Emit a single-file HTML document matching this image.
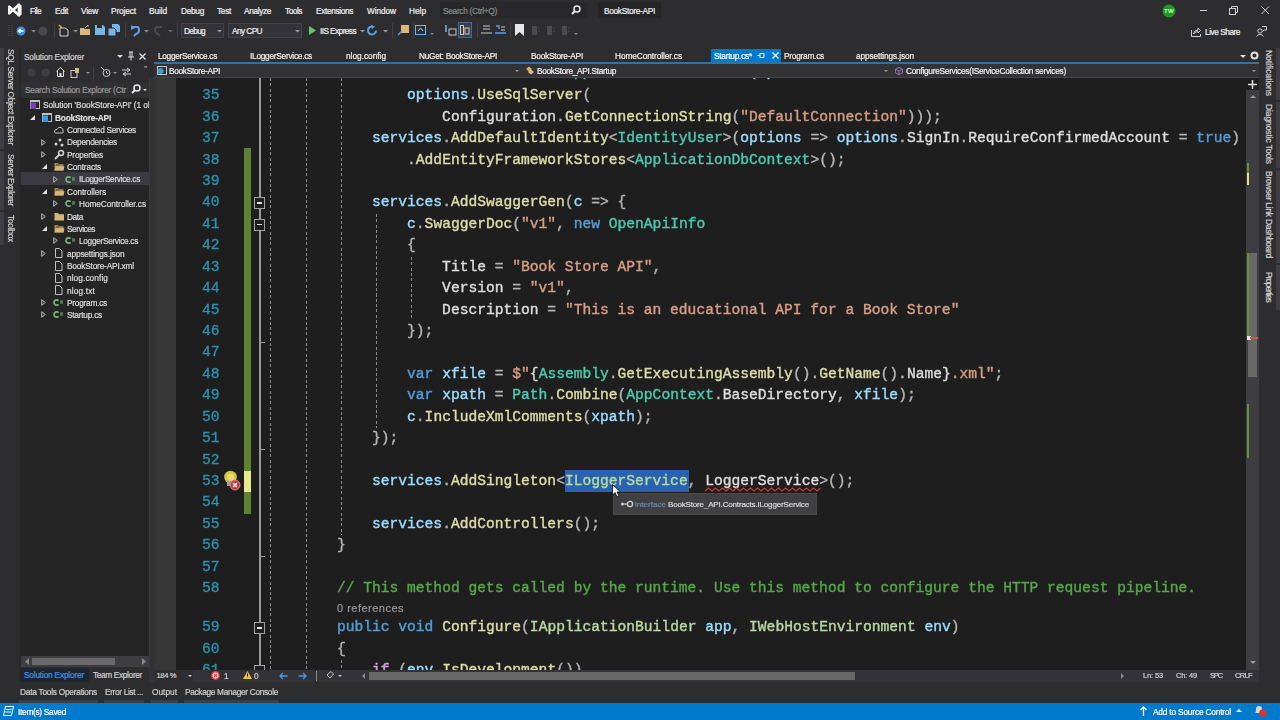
<!DOCTYPE html>
<html><head><meta charset="utf-8">
<style>
*{margin:0;padding:0;box-sizing:border-box}
html,body{width:1280px;height:720px;overflow:hidden;background:#2d2d30}
#root{position:absolute;left:0;top:0;width:1280px;height:720px;filter:blur(0.4px)}
body{position:relative;font-family:"Liberation Sans",sans-serif;font-size:9px;color:#f1f1f1}
.a{position:absolute}
.t{position:absolute;white-space:pre;height:12px;line-height:12px;-webkit-text-stroke:0.2px currentColor}
.code{position:absolute;font-family:"Liberation Mono",monospace;font-size:14.61px;white-space:pre;line-height:21.43px;height:21.43px;-webkit-text-stroke:0.4px currentColor}
.v{color:#9cdcfe}.m{color:#dcdcaa}.ty{color:#4ec9b0}.if{color:#b8d7a3}.k{color:#569cd6}.s{color:#d69d85}.c{color:#57a64a}.p{color:#b4b4b4}.w{color:#dcdcdc}.ck{color:#d8a0df}
.ln{position:absolute;font-family:"Liberation Mono",monospace;font-size:14.61px;-webkit-text-stroke:0.35px currentColor;color:#2b91af;line-height:21.43px;left:0;width:64.5px;text-align:right}
.g{position:absolute;width:1px;background:repeating-linear-gradient(to bottom,#8a8a8a 0,#8a8a8a 3px,transparent 3px,transparent 5.3px)}
svg{position:absolute;overflow:visible}
</style></head><body><div id="root">

<!-- ===== Title / menu bar + toolbar ===== -->
<div class="a" style="left:0;top:0;width:1280px;height:48px;background:#2d2d30"></div>
<svg style="left:8px;top:3px" width="14" height="14" viewBox="0 0 14 14"><path d="M1.2 3.6 L11 12.3 M1.2 10.4 L11 1.7" stroke="#f4f4f4" stroke-width="2.6" stroke-linecap="round"/><rect x="0" y="3" width="2.4" height="8" rx="0.6" fill="#f4f4f4"/><path d="M9.6 0.4 L13.6 2.2 L13.6 11.8 L9.6 13.6 Z" fill="#f4f4f4"/></svg>
<div class="t" style="left:30.0px;top:4.5px;font-size:8.3px;color:#f1f1f1;letter-spacing:-0.593px">File</div>
<div class="t" style="left:55.0px;top:4.5px;font-size:8.3px;color:#f1f1f1;letter-spacing:-0.325px">Edit</div>
<div class="t" style="left:81.0px;top:4.5px;font-size:8.3px;color:#f1f1f1;letter-spacing:-0.210px">View</div>
<div class="t" style="left:111.0px;top:4.5px;font-size:8.3px;color:#f1f1f1;letter-spacing:-0.119px">Project</div>
<div class="t" style="left:149.0px;top:4.5px;font-size:8.3px;color:#f1f1f1;letter-spacing:-0.091px">Build</div>
<div class="t" style="left:181.0px;top:4.5px;font-size:8.3px;color:#f1f1f1;letter-spacing:-0.291px">Debug</div>
<div class="t" style="left:217.0px;top:4.5px;font-size:8.3px;color:#f1f1f1;letter-spacing:-0.305px">Test</div>
<div class="t" style="left:244.0px;top:4.5px;font-size:8.3px;color:#f1f1f1;letter-spacing:-0.361px">Analyze</div>
<div class="t" style="left:285.0px;top:4.5px;font-size:8.3px;color:#f1f1f1;letter-spacing:-0.475px">Tools</div>
<div class="t" style="left:316.0px;top:4.5px;font-size:8.3px;color:#f1f1f1;letter-spacing:-0.360px">Extensions</div>
<div class="t" style="left:367.0px;top:4.5px;font-size:8.3px;color:#f1f1f1;letter-spacing:-0.087px">Window</div>
<div class="t" style="left:409.0px;top:4.5px;font-size:8.3px;color:#f1f1f1;letter-spacing:-0.017px">Help</div>
<div class="a" style="left:440px;top:2px;width:147px;height:16px;background:#28282a;"></div>
<div class="t" style="left:443.0px;top:4.5px;font-size:8.3px;color:#8a8a8a;letter-spacing:-0.289px">Search (Ctrl+Q)</div>
<svg style="left:571px;top:5px" width="10" height="10" viewBox="0 0 10 10"><circle cx="6" cy="4" r="3" fill="none" stroke="#e8e8e8" stroke-width="1.5"/><path d="M4 6 L1 9" stroke="#e8e8e8" stroke-width="2"/></svg>
<div class="a" style="left:598px;top:2px;width:63px;height:16px;background:#252527;"></div>
<div class="t" style="left:604.0px;top:4.5px;font-size:8.3px;color:#f1f1f1;letter-spacing:-0.300px">BookStore-API</div>
<svg style="left:1162px;top:4px" width="14" height="14" viewBox="0 0 14 14"><circle cx="7" cy="7" r="6.5" fill="#1f9a1f"/></svg>
<div class="t" style="left:1164.0px;top:5.0px;font-size:6px;color:#d8ffd8;letter-spacing:0.336px">TW</div>
<div class="a" style="left:1200px;top:10px;width:7px;height:1px;background:#d0d0d0;"></div>
<svg style="left:1229px;top:6px" width="10" height="10" viewBox="0 0 10 10"><rect x="0.5" y="2.5" width="6" height="6" fill="none" stroke="#d0d0d0"/><path d="M2.5 2.5 L2.5 0.5 L8.5 0.5 L8.5 6.5 L6.5 6.5" fill="none" stroke="#d0d0d0"/></svg>
<svg style="left:1261px;top:6px" width="9" height="9" viewBox="0 0 9 9"><path d="M0.5 0.5 L8 8 M8 0.5 L0.5 8" stroke="#d0d0d0" stroke-width="1"/></svg>
<svg style="left:8px;top:24px" width="5" height="14" viewBox="0 0 5 14"><path d="M1 1 L1 13 M4 1 L4 13" stroke="#555" stroke-dasharray="1 1"/></svg>
<svg style="left:16px;top:26px" width="10" height="10" viewBox="0 0 10 10"><circle cx="5" cy="5" r="4.5" fill="#3d8ee0"/><path d="M7.5 5 L2.5 5 M4.5 3 L2.5 5 L4.5 7" stroke="#fff" stroke-width="1.3" fill="none"/></svg>
<svg style="left:30.5px;top:29.75px" width="5.0" height="3.5" viewBox="0 0 5.0 3.5"><path d="M0 0 L5.0 0 L2.5 2.5 Z" fill="#888"/></svg>
<svg style="left:38px;top:26px" width="10" height="10" viewBox="0 0 10 10"><circle cx="5" cy="5" r="4.5" fill="#4a4a4a"/></svg>
<div class="a" style="left:54px;top:23px;width:1px;height:15px;background:#3f3f46;"></div>
<svg style="left:58px;top:24px" width="12" height="13" viewBox="0 0 12 13"><path d="M2 4 L2 12 L10 12 L10 6 L7 4 Z" fill="none" stroke="#d0d0d0"/><path d="M1 1 L4 4" stroke="#e0b060" stroke-width="1.5"/></svg>
<svg style="left:72.5px;top:29.75px" width="5.0" height="3.5" viewBox="0 0 5.0 3.5"><path d="M0 0 L5.0 0 L2.5 2.5 Z" fill="#888"/></svg>
<svg style="left:80px;top:25px" width="12" height="11" viewBox="0 0 12 11"><path d="M0 3 L4 3 L5 4 L10 4 L10 10 L0 10 Z" fill="#dcb67a"/><path d="M5 3 L8 0 L8 2" stroke="#e0b060" fill="none"/></svg>
<svg style="left:95px;top:25px" width="10" height="10" viewBox="0 0 10 10"><path d="M0 0 L8 0 L10 2 L10 10 L0 10 Z" fill="#75b6e7"/><rect x="2" y="0" width="5" height="3" fill="#2d2d30"/></svg>
<svg style="left:108px;top:24px" width="12" height="12" viewBox="0 0 12 12"><path d="M4 0 L10 0 L12 2 L12 8 L4 8 Z" fill="#75b6e7"/><path d="M0 4 L6 4 L8 6 L8 12 L0 12 Z" fill="#75b6e7" stroke="#2d2d30"/></svg>
<div class="a" style="left:125px;top:23px;width:1px;height:15px;background:#3f3f46;"></div>
<svg style="left:130px;top:25px" width="10" height="12" viewBox="0 0 10 12"><path d="M2 2 L7 2 Q9 2 9 5 Q9 8 6 9 L4 11" stroke="#5aa0e8" stroke-width="2" fill="none"/><path d="M1 0 L1 5 L5 3 Z" fill="#5aa0e8"/></svg>
<svg style="left:143.5px;top:29.75px" width="5.0" height="3.5" viewBox="0 0 5.0 3.5"><path d="M0 0 L5.0 0 L2.5 2.5 Z" fill="#888"/></svg>
<svg style="left:154px;top:25px" width="10" height="12" viewBox="0 0 10 12"><path d="M8 2 L3 2 Q1 2 1 5 Q1 8 4 9 L6 11" stroke="#4a4a4a" stroke-width="2" fill="none"/></svg>
<svg style="left:167.5px;top:29.75px" width="5.0" height="3.5" viewBox="0 0 5.0 3.5"><path d="M0 0 L5.0 0 L2.5 2.5 Z" fill="#666"/></svg>
<div class="a" style="left:177px;top:23px;width:1px;height:15px;background:#3f3f46;"></div>
<div class="a" style="left:181px;top:23px;width:43px;height:15px;background:#333337;border:1px solid #434346"></div>
<div class="t" style="left:184.0px;top:25.0px;font-size:8.3px;color:#f1f1f1;letter-spacing:-0.691px">Debug</div>
<svg style="left:216.5px;top:29.75px" width="5.0" height="3.5" viewBox="0 0 5.0 3.5"><path d="M0 0 L5.0 0 L2.5 2.5 Z" fill="#999"/></svg>
<div class="a" style="left:228px;top:23px;width:74px;height:15px;background:#333337;border:1px solid #434346"></div>
<div class="t" style="left:232.0px;top:25.0px;font-size:8.3px;color:#f1f1f1;letter-spacing:-0.590px">Any CPU</div>
<svg style="left:294.5px;top:29.75px" width="5.0" height="3.5" viewBox="0 0 5.0 3.5"><path d="M0 0 L5.0 0 L2.5 2.5 Z" fill="#999"/></svg>
<svg style="left:309px;top:26px" width="7" height="9" viewBox="0 0 7 9"><path d="M0 0 L7 4.5 L0 9 Z" fill="#6cc16c"/></svg>
<div class="t" style="left:320.0px;top:25.0px;font-size:8.3px;color:#f1f1f1;letter-spacing:-0.585px">IIS Express</div>
<svg style="left:359.5px;top:29.75px" width="5.0" height="3.5" viewBox="0 0 5.0 3.5"><path d="M0 0 L5.0 0 L2.5 2.5 Z" fill="#999"/></svg>
<svg style="left:367px;top:25px" width="11" height="11" viewBox="0 0 11 11"><path d="M9 5.5 A4 4 0 1 1 5.5 1.5" stroke="#5aa0e8" stroke-width="2" fill="none"/><path d="M4 0 L8 1.5 L5 4 Z" fill="#5aa0e8"/></svg>
<svg style="left:382.5px;top:29.75px" width="5.0" height="3.5" viewBox="0 0 5.0 3.5"><path d="M0 0 L5.0 0 L2.5 2.5 Z" fill="#999"/></svg>
<div class="a" style="left:392px;top:23px;width:1px;height:15px;background:#3f3f46;"></div>
<svg style="left:398px;top:24px" width="11" height="12" viewBox="0 0 11 12"><rect x="3" y="1" width="8" height="8" fill="#dcb67a"/><path d="M0 11 L4 7" stroke="#6aa0e0" stroke-width="1.5"/></svg>
<div class="a" style="left:413px;top:23px;width:1px;height:15px;background:#3f3f46;"></div>
<svg style="left:415px;top:25px" width="11" height="10" viewBox="0 0 11 10"><rect x="0.5" y="0.5" width="10" height="9" fill="none" stroke="#75b6e7"/><path d="M3 6 L5.5 3 L8 6" stroke="#d0d0d0" fill="none"/></svg>
<svg style="left:430px;top:33.0px" width="4" height="3" viewBox="0 0 4 3"><path d="M0 0 L4 0 L2 2 Z" fill="#888"/></svg>
<svg style="left:445px;top:25px" width="12" height="11" viewBox="0 0 12 11"><path d="M1 0 L1 7" stroke="#75b6e7" stroke-width="1.5"/><rect x="4" y="4" width="7" height="6" fill="none" stroke="#c8c8c8"/></svg>
<div class="a" style="left:458px;top:22px;width:14px;height:16px;background:#3e3e40;border:1px solid #3a6ea8"></div>
<svg style="left:460px;top:25px" width="10" height="10" viewBox="0 0 10 10"><rect x="0.5" y="0.5" width="3" height="9" fill="none" stroke="#c8c8c8"/><rect x="5" y="3" width="4" height="6" fill="none" stroke="#c8c8c8"/></svg>
<div class="a" style="left:477px;top:23px;width:1px;height:15px;background:#3f3f46;"></div>
<svg style="left:481px;top:25px" width="11" height="11" viewBox="0 0 11 11"><path d="M2 1 L9 1 M2 4 L9 4 M0 8 L11 8" stroke="#c8c8c8" stroke-width="1.2"/></svg>
<svg style="left:495px;top:25px" width="11" height="11" viewBox="0 0 11 11"><path d="M1 1 L4 1 L4 4 M0 8 L11 8" stroke="#5aa0e8" stroke-width="1.3" fill="none"/><path d="M6 2 L10 2 M6 5 L10 5" stroke="#c8c8c8"/></svg>
<div class="a" style="left:510px;top:23px;width:1px;height:15px;background:#3f3f46;"></div>
<svg style="left:515px;top:24px" width="9" height="12" viewBox="0 0 9 12"><path d="M0 0 L9 0 L9 12 L4.5 8 L0 12 Z" fill="#e8e8e8"/></svg>
<svg style="left:531px;top:25px" width="9" height="11" viewBox="0 0 9 11"><path d="M1 1 L6 1 L6 10 L1 10 Z" fill="#4a4a4a"/><path d="M7 3 L9 3 M7 6 L9 6" stroke="#4a4a4a"/></svg>
<svg style="left:546px;top:25px" width="9" height="11" viewBox="0 0 9 11"><path d="M1 1 L6 1 L6 10 L1 10 Z" fill="#4a4a4a"/><path d="M7 3 L9 3 M7 6 L9 6" stroke="#4a4a4a"/></svg>
<svg style="left:561px;top:25px" width="9" height="11" viewBox="0 0 9 11"><path d="M1 1 L6 1 L6 10 L1 10 Z" fill="#4a4a4a"/><path d="M7 3 L9 3 M7 6 L9 6" stroke="#4a4a4a"/></svg>
<svg style="left:574px;top:33.0px" width="4" height="3" viewBox="0 0 4 3"><path d="M0 0 L4 0 L2 2 Z" fill="#888"/></svg>
<svg style="left:1191px;top:27px" width="10" height="10" viewBox="0 0 10 10"><path d="M0.5 3 L0.5 9.5 L9.5 9.5 L9.5 7" stroke="#d0d0d0" fill="none"/><path d="M2.5 7 Q3 3 7 3 L7 1 L9.5 3.5 L7 6 L7 4.5 Q4 4.5 2.5 7" fill="none" stroke="#d0d0d0"/></svg>
<div class="t" style="left:1205.0px;top:26.2px;font-size:8.3px;color:#f1f1f1;letter-spacing:-0.468px">Live Share</div>
<svg style="left:1256px;top:26px" width="11" height="11" viewBox="0 0 11 11"><circle cx="4" cy="5" r="2.2" fill="none" stroke="#d0d0d0"/><path d="M0.5 10.5 Q4 6 7.5 10.5" fill="none" stroke="#d0d0d0"/><path d="M6 0.5 L10.5 0.5 L10.5 4 L8 4 L6.5 5.5" fill="none" stroke="#d0d0d0"/></svg>

<!-- ===== Left tool strip ===== -->
<div class="a" style="left:0;top:48px;width:20px;height:655px;background:#2d2d30"></div>
<div class="a" style="left:0px;top:48px;width:4px;height:101px;background:#3e3e42;"></div>
<div class="a" style="left:0px;top:151px;width:4px;height:59px;background:#3e3e42;"></div>
<div class="a" style="left:0px;top:212px;width:4px;height:33px;background:#3e3e42;"></div>
<div class="t" style="left:4.5px;top:49px;font-size:8.3px;color:#d0d0d0;letter-spacing:-0.252px;transform-origin:0 0;transform:translate(12px,0) rotate(90deg)">SQL Server Object Explorer</div>
<div class="t" style="left:4.5px;top:154px;font-size:8.3px;color:#d0d0d0;letter-spacing:-0.377px;transform-origin:0 0;transform:translate(12px,0) rotate(90deg)">Server Explorer</div>
<div class="t" style="left:4.5px;top:215px;font-size:8.3px;color:#d0d0d0;letter-spacing:-0.229px;transform-origin:0 0;transform:translate(12px,0) rotate(90deg)">Toolbox</div>
<div class="a" style="left:19px;top:48px;width:2px;height:634px;background:#282829;"></div>

<!-- ===== Solution explorer ===== -->
<div class="a" style="left:21px;top:48px;width:129px;height:634px;background:#252526"></div>
<div class="a" style="left:21px;top:48px;width:129px;height:18px;background:#2d2d30;"></div>
<div class="t" style="left:24.0px;top:51.2px;font-size:8.3px;color:#d0d0d0;letter-spacing:-0.188px">Solution Explorer</div>
<svg style="left:117px;top:55.0px" width="6" height="4" viewBox="0 0 6 4"><path d="M0 0 L6 0 L3 3 Z" fill="#e0e0e0"/></svg>
<svg style="left:128px;top:51px" width="6" height="10" viewBox="0 0 6 10"><path d="M1 1 L5 1 M2 1 L2 6 M4 1 L4 6 M0 6 L6 6 M3 6 L3 9.5" stroke="#e0e0e0" fill="none"/></svg>
<svg style="left:139px;top:53px" width="7" height="7" viewBox="0 0 7 7"><path d="M0.5 0.5 L6.5 6.5 M6.5 0.5 L0.5 6.5" stroke="#e8e8e8" stroke-width="1.2"/></svg>
<div class="a" style="left:21px;top:66px;width:129px;height:16px;background:#2d2d30;"></div>
<svg style="left:27px;top:68px" width="9" height="9" viewBox="0 0 9 9"><circle cx="4.5" cy="4.5" r="4" fill="#3e3e40"/></svg>
<svg style="left:41px;top:68px" width="9" height="9" viewBox="0 0 9 9"><circle cx="4.5" cy="4.5" r="4" fill="#3e3e40"/></svg>
<svg style="left:56px;top:67px" width="9" height="10" viewBox="0 0 9 10"><path d="M0.5 4.5 L4.5 0.5 L8.5 4.5 M1.5 3.5 L1.5 9.5 L7.5 9.5 L7.5 3.5" fill="none" stroke="#e0e0e0"/><rect x="3.5" y="6" width="2" height="3.5" fill="#e0e0e0"/></svg>
<svg style="left:70px;top:67px" width="12" height="11" viewBox="0 0 12 11"><rect x="1" y="3.5" width="6" height="7" fill="none" stroke="#c8c8c8"/><rect x="5" y="1" width="4" height="5" fill="#dcb67a"/></svg>
<svg style="left:85.5px;top:72.0px" width="4" height="3" viewBox="0 0 4 3"><path d="M0 0 L4 0 L2 2 Z" fill="#999"/></svg>
<div class="a" style="left:93px;top:67px;width:1px;height:14px;background:#3f3f46;"></div>
<svg style="left:101px;top:67px" width="10" height="11" viewBox="0 0 10 11"><circle cx="5.5" cy="6" r="3.5" fill="none" stroke="#c8c8c8"/><path d="M5.5 4 L5.5 6 L7 7" stroke="#c8c8c8" fill="none"/><path d="M0 0 L3 3" stroke="#c8c8c8"/></svg>
<svg style="left:113px;top:72.0px" width="4" height="3" viewBox="0 0 4 3"><path d="M0 0 L4 0 L2 2 Z" fill="#999"/></svg>
<svg style="left:122px;top:67px" width="9" height="10" viewBox="0 0 9 10"><path d="M0 3 L8 3 M5 1 L8 3 L5 5 M9 7 L1 7 M4 5 L1 7 L4 9" stroke="#d0d0d0" fill="none"/></svg>
<div class="t" style="left:144.0px;top:63.2px;font-size:8px;color:#aaa;letter-spacing:-0.028px">&#x27;&#x27;</div>
<div class="a" style="left:21px;top:82px;width:128px;height:16px;background:#303032;"></div>
<div class="t" style="left:25.0px;top:83.7px;font-size:8.3px;color:#999999;letter-spacing:-0.239px">Search Solution Explorer (Ctr</div>
<svg style="left:131px;top:84px" width="10" height="10" viewBox="0 0 10 10"><circle cx="6" cy="4" r="3" fill="none" stroke="#e8e8e8" stroke-width="1.5"/><path d="M4 6 L1 9" stroke="#e8e8e8" stroke-width="2"/></svg>
<svg style="left:143px;top:89.0px" width="4" height="3" viewBox="0 0 4 3"><path d="M0 0 L4 0 L2 2 Z" fill="#e0e0e0"/></svg>
<div class="a" style="left:21px;top:172.2px;width:128px;height:12.8px;background:#3a3a40;"></div>
<svg style="left:30px;top:100.2px" width="10" height="9" viewBox="0 0 10 9"><rect x="0.5" y="0.5" width="9" height="8" fill="none" stroke="#c0c0c0"/><rect x="0.5" y="0" width="9" height="2" fill="#c0c0c0"/><rect x="0.5" y="2.5" width="5.5" height="6.5" fill="#7a3fb0"/></svg>
<div class="t" style="left:43.0px;top:99.4px;font-size:8.3px;color:#dedede;letter-spacing:-0.076px;overflow:hidden;width:107px">Solution &#x27;BookStore-API&#x27; (1 of</div>
<svg style="left:30px;top:115.04px" width="5" height="5" viewBox="0 0 5 5"><path d="M5 0 L5 5 L0 5 Z" fill="#e0e0e0"/></svg>
<svg style="left:42px;top:113.04px" width="10" height="9" viewBox="0 0 10 9"><rect x="0.5" y="0.5" width="9" height="8" fill="none" stroke="#c0c0c0"/><rect x="0.5" y="0" width="9" height="2" fill="#c0c0c0"/><rect x="0.5" y="2.5" width="5.5" height="6.5" fill="#3a9ad8"/></svg>
<div class="t" style="left:55.0px;top:111.7px;font-size:8.3px;color:#dedede;letter-spacing:-0.197px;font-weight:bold">BookStore-API</div>
<svg style="left:54px;top:125.88px" width="10" height="9" viewBox="0 0 10 9"><path d="M2 7 Q0 7 0.5 5 Q1 3 3 3.5 Q4 0.5 7 1.5 Q9.5 2.5 9 5 Q10 7 8 7 Z" fill="none" stroke="#c8c8c8"/></svg>
<div class="t" style="left:67.0px;top:124.1px;font-size:8.3px;color:#dedede;letter-spacing:-0.293px">Connected Services</div>
<svg style="left:41px;top:138.72px" width="5" height="7" viewBox="0 0 5 7"><path d="M0.7 0.7 L4.3 3.5 L0.7 6.3 Z" fill="#3a3a3a" stroke="#b8b8b8" stroke-width="1"/></svg>
<svg style="left:54px;top:138.22px" width="10" height="9" viewBox="0 0 10 9"><circle cx="2" cy="6" r="1.5" fill="#d0d0d0"/><circle cx="6" cy="2" r="1.5" fill="#d0d0d0"/><circle cx="8" cy="7" r="1.5" fill="#d0d0d0"/></svg>
<div class="t" style="left:67.0px;top:136.4px;font-size:8.3px;color:#dedede;letter-spacing:-0.255px">Dependencies</div>
<svg style="left:41px;top:151.06px" width="5" height="7" viewBox="0 0 5 7"><path d="M0.7 0.7 L4.3 3.5 L0.7 6.3 Z" fill="#3a3a3a" stroke="#b8b8b8" stroke-width="1"/></svg>
<svg style="left:54px;top:149.56px" width="10" height="10" viewBox="0 0 10 10"><path d="M1 9 L6 4" stroke="#d0d0d0" stroke-width="2"/><circle cx="7" cy="3" r="2.5" fill="none" stroke="#d0d0d0" stroke-width="1.5"/></svg>
<div class="t" style="left:67.0px;top:148.8px;font-size:8.3px;color:#dedede;letter-spacing:-0.183px">Properties</div>
<svg style="left:42px;top:164.4px" width="5" height="5" viewBox="0 0 5 5"><path d="M5 0 L5 5 L0 5 Z" fill="#e0e0e0"/></svg>
<svg style="left:54px;top:162.4px" width="11" height="9" viewBox="0 0 11 9"><path d="M0.5 1 L4 1 L5 2.2 L9.5 2.2 L9.5 8.5 L0.5 8.5 Z" fill="#a88a55"/><path d="M1.5 4.2 L10.5 4.2 L9.5 8.5 L0.5 8.5 Z" fill="#d7b77c"/><path d="M2 3 L5 3" stroke="#3a3020" stroke-width="0.8"/></svg>
<div class="t" style="left:67.0px;top:161.1px;font-size:8.3px;color:#dedede;letter-spacing:-0.168px">Contracts</div>
<svg style="left:53px;top:175.74px" width="5" height="7" viewBox="0 0 5 7"><path d="M0.7 0.7 L4.3 3.5 L0.7 6.3 Z" fill="#3a3a3a" stroke="#b8b8b8" stroke-width="1"/></svg>
<svg style="left:66px;top:175.74px" width="10" height="7" viewBox="0 0 10 7"><path d="M4.6 1.6 A2.7 2.7 0 1 0 4.6 5.4" stroke="#78b878" stroke-width="1.7" fill="none"/><path d="M6 2.2 L9 2.2 M6 3.8 L9 3.8 M6.9 1 L6.9 5 M8.1 1 L8.1 5" stroke="#78b878" stroke-width="0.5"/></svg>
<div class="t" style="left:79.0px;top:173.4px;font-size:8.3px;color:#dedede;letter-spacing:-0.319px">ILoggerService.cs</div>
<svg style="left:42px;top:189.07999999999998px" width="5" height="5" viewBox="0 0 5 5"><path d="M5 0 L5 5 L0 5 Z" fill="#e0e0e0"/></svg>
<svg style="left:54px;top:187.07999999999998px" width="11" height="9" viewBox="0 0 11 9"><path d="M0.5 1 L4 1 L5 2.2 L9.5 2.2 L9.5 8.5 L0.5 8.5 Z" fill="#a88a55"/><path d="M1.5 4.2 L10.5 4.2 L9.5 8.5 L0.5 8.5 Z" fill="#d7b77c"/><path d="M2 3 L5 3" stroke="#3a3020" stroke-width="0.8"/></svg>
<div class="t" style="left:67.0px;top:185.8px;font-size:8.3px;color:#dedede;letter-spacing:-0.103px">Controllers</div>
<svg style="left:53px;top:200.42000000000002px" width="5" height="7" viewBox="0 0 5 7"><path d="M0.7 0.7 L4.3 3.5 L0.7 6.3 Z" fill="#3a3a3a" stroke="#b8b8b8" stroke-width="1"/></svg>
<svg style="left:66px;top:200.42000000000002px" width="10" height="7" viewBox="0 0 10 7"><path d="M4.6 1.6 A2.7 2.7 0 1 0 4.6 5.4" stroke="#78b878" stroke-width="1.7" fill="none"/><path d="M6 2.2 L9 2.2 M6 3.8 L9 3.8 M6.9 1 L6.9 5 M8.1 1 L8.1 5" stroke="#78b878" stroke-width="0.5"/></svg>
<div class="t" style="left:79.0px;top:198.1px;font-size:8.3px;color:#dedede;letter-spacing:-0.074px">HomeController.cs</div>
<svg style="left:41px;top:212.76px" width="5" height="7" viewBox="0 0 5 7"><path d="M0.7 0.7 L4.3 3.5 L0.7 6.3 Z" fill="#3a3a3a" stroke="#b8b8b8" stroke-width="1"/></svg>
<svg style="left:54px;top:211.76px" width="11" height="9" viewBox="0 0 11 9"><path d="M0.5 1 L4 1 L5 2.2 L10 2.2 L10 8.5 L0.5 8.5 Z" fill="#d7b77c"/></svg>
<div class="t" style="left:67.0px;top:210.5px;font-size:8.3px;color:#dedede;letter-spacing:-0.383px">Data</div>
<svg style="left:42px;top:226.10000000000002px" width="5" height="5" viewBox="0 0 5 5"><path d="M5 0 L5 5 L0 5 Z" fill="#e0e0e0"/></svg>
<svg style="left:54px;top:224.10000000000002px" width="11" height="9" viewBox="0 0 11 9"><path d="M0.5 1 L4 1 L5 2.2 L9.5 2.2 L9.5 8.5 L0.5 8.5 Z" fill="#a88a55"/><path d="M1.5 4.2 L10.5 4.2 L9.5 8.5 L0.5 8.5 Z" fill="#d7b77c"/><path d="M2 3 L5 3" stroke="#3a3020" stroke-width="0.8"/></svg>
<div class="t" style="left:67.0px;top:222.8px;font-size:8.3px;color:#dedede;letter-spacing:-0.478px">Services</div>
<svg style="left:53px;top:237.44px" width="5" height="7" viewBox="0 0 5 7"><path d="M0.7 0.7 L4.3 3.5 L0.7 6.3 Z" fill="#3a3a3a" stroke="#b8b8b8" stroke-width="1"/></svg>
<svg style="left:66px;top:237.44px" width="10" height="7" viewBox="0 0 10 7"><path d="M4.6 1.6 A2.7 2.7 0 1 0 4.6 5.4" stroke="#78b878" stroke-width="1.7" fill="none"/><path d="M6 2.2 L9 2.2 M6 3.8 L9 3.8 M6.9 1 L6.9 5 M8.1 1 L8.1 5" stroke="#78b878" stroke-width="0.5"/></svg>
<div class="t" style="left:79.0px;top:235.1px;font-size:8.3px;color:#dedede;letter-spacing:-0.320px">LoggerService.cs</div>
<svg style="left:41px;top:249.77999999999997px" width="5" height="7" viewBox="0 0 5 7"><path d="M0.7 0.7 L4.3 3.5 L0.7 6.3 Z" fill="#3a3a3a" stroke="#b8b8b8" stroke-width="1"/></svg>
<svg style="left:54px;top:248.27999999999997px" width="9" height="10" viewBox="0 0 9 10"><path d="M1.5 0.5 L5.5 0.5 L8 3 L8 9.5 L1.5 9.5 Z" fill="none" stroke="#c0c0c0"/></svg>
<div class="t" style="left:67.0px;top:247.5px;font-size:8.3px;color:#dedede;letter-spacing:-0.155px">appsettings.json</div>
<svg style="left:54px;top:260.62px" width="9" height="10" viewBox="0 0 9 10"><path d="M1.5 0.5 L5.5 0.5 L8 3 L8 9.5 L1.5 9.5 Z" fill="none" stroke="#c0c0c0"/></svg>
<div class="t" style="left:67.0px;top:259.8px;font-size:8.3px;color:#dedede;letter-spacing:-0.183px">BookStore-API.xml</div>
<svg style="left:54px;top:272.96px" width="9" height="10" viewBox="0 0 9 10"><path d="M1.5 0.5 L5.5 0.5 L8 3 L8 9.5 L1.5 9.5 Z" fill="none" stroke="#c0c0c0"/></svg>
<div class="t" style="left:67.0px;top:272.2px;font-size:8.3px;color:#dedede;letter-spacing:0.078px">nlog.config</div>
<svg style="left:54px;top:285.3px" width="9" height="10" viewBox="0 0 9 10"><path d="M1.5 0.5 L5.5 0.5 L8 3 L8 9.5 L1.5 9.5 Z" fill="none" stroke="#c0c0c0"/></svg>
<div class="t" style="left:67.0px;top:284.5px;font-size:8.3px;color:#dedede;letter-spacing:0.155px">nlog.txt</div>
<svg style="left:41px;top:299.14px" width="5" height="7" viewBox="0 0 5 7"><path d="M0.7 0.7 L4.3 3.5 L0.7 6.3 Z" fill="#3a3a3a" stroke="#b8b8b8" stroke-width="1"/></svg>
<svg style="left:54px;top:299.14px" width="10" height="7" viewBox="0 0 10 7"><path d="M4.6 1.6 A2.7 2.7 0 1 0 4.6 5.4" stroke="#78b878" stroke-width="1.7" fill="none"/><path d="M6 2.2 L9 2.2 M6 3.8 L9 3.8 M6.9 1 L6.9 5 M8.1 1 L8.1 5" stroke="#78b878" stroke-width="0.5"/></svg>
<div class="t" style="left:67.0px;top:296.8px;font-size:8.3px;color:#dedede;letter-spacing:-0.243px">Program.cs</div>
<svg style="left:41px;top:311.48px" width="5" height="7" viewBox="0 0 5 7"><path d="M0.7 0.7 L4.3 3.5 L0.7 6.3 Z" fill="#3a3a3a" stroke="#b8b8b8" stroke-width="1"/></svg>
<svg style="left:54px;top:311.48px" width="10" height="7" viewBox="0 0 10 7"><path d="M4.6 1.6 A2.7 2.7 0 1 0 4.6 5.4" stroke="#78b878" stroke-width="1.7" fill="none"/><path d="M6 2.2 L9 2.2 M6 3.8 L9 3.8 M6.9 1 L6.9 5 M8.1 1 L8.1 5" stroke="#78b878" stroke-width="0.5"/></svg>
<div class="t" style="left:67.0px;top:309.2px;font-size:8.3px;color:#dedede;letter-spacing:-0.236px">Startup.cs</div>
<div class="a" style="left:21px;top:656px;width:129px;height:11px;background:#3e3e42;"></div>
<svg style="left:25px;top:658px" width="4" height="7" viewBox="0 0 4 7"><path d="M4 0 L0 3.5 L4 7 Z" fill="#888"/></svg>
<div class="a" style="left:32px;top:658px;width:83px;height:7px;background:#686868;"></div>
<svg style="left:142px;top:658px" width="4" height="7" viewBox="0 0 4 7"><path d="M0 0 L4 3.5 L0 7 Z" fill="#888"/></svg>
<div class="a" style="left:21px;top:667px;width:129px;height:15px;background:#2d2d30;"></div>
<div class="a" style="left:21px;top:668px;width:68px;height:14px;background:#1f2530;"></div>
<div class="t" style="left:24.0px;top:669.2px;font-size:8.3px;color:#3794e8;letter-spacing:-0.188px">Solution Explorer</div>
<div class="t" style="left:93.0px;top:669.2px;font-size:8.3px;color:#d0d0d0;letter-spacing:-0.347px">Team Explorer</div>

<!-- ===== Editor ===== -->
<div class="a" style="left:155px;top:48px;width:1104px;height:14px;background:#2d2d30"></div>
<div class="a" style="left:149px;top:78px;width:6px;height:592px;background:#323233;border-left:1px solid #3a3a3b"></div>
<div class="a" style="left:153.5px;top:62px;width:1105.5px;height:2px;background:#2f72a8"></div>
<div class="a" style="left:153.5px;top:64px;width:1105.5px;height:14px;background:#333335;border-bottom:1px solid #444446"></div>
<div class="t" style="left:158.0px;top:50.2px;font-size:8.3px;color:#f1f1f1;letter-spacing:-0.320px">LoggerService.cs</div>
<div class="t" style="left:250.0px;top:50.2px;font-size:8.3px;color:#f1f1f1;letter-spacing:-0.261px">ILoggerService.cs</div>
<div class="t" style="left:346.0px;top:50.2px;font-size:8.3px;color:#f1f1f1;letter-spacing:-0.013px">nlog.config</div>
<div class="t" style="left:419.0px;top:50.2px;font-size:8.3px;color:#f1f1f1;letter-spacing:-0.275px">NuGet: BookStore-API</div>
<div class="t" style="left:531.0px;top:50.2px;font-size:8.3px;color:#f1f1f1;letter-spacing:-0.223px">BookStore-API</div>
<div class="t" style="left:615.0px;top:50.2px;font-size:8.3px;color:#f1f1f1;letter-spacing:-0.074px">HomeController.cs</div>
<div class="a" style="left:711px;top:49px;width:70px;height:13px;background:#007acc;"></div>
<div class="t" style="left:714.0px;top:50.2px;font-size:8.3px;color:#ffffff;letter-spacing:-0.236px">Startup.cs*</div>
<svg style="left:757px;top:52px" width="8" height="7" viewBox="0 0 8 7"><path d="M0.5 3.5 L3 3.5 M3 1 L3 6 M3 1.5 L7 1.5 L7 5.5 L3 5.5" stroke="#e8f0ff" fill="none"/></svg>
<svg style="left:772px;top:52px" width="7" height="7" viewBox="0 0 7 7"><path d="M0.5 0.5 L6.5 6.5 M6.5 0.5 L0.5 6.5" stroke="#ffffff" stroke-width="1.2"/></svg>
<div class="t" style="left:784.0px;top:50.2px;font-size:8.3px;color:#f1f1f1;letter-spacing:-0.243px">Program.cs</div>
<div class="t" style="left:856.0px;top:50.2px;font-size:8.3px;color:#f1f1f1;letter-spacing:-0.124px">appsettings.json</div>
<svg style="left:1240px;top:54.5px" width="6" height="4" viewBox="0 0 6 4"><path d="M0 0 L6 0 L3 3 Z" fill="#e0e0e0"/></svg>
<svg style="left:1250px;top:51px" width="9" height="9" viewBox="0 0 9 9"><circle cx="4.5" cy="4.5" r="3" fill="none" stroke="#e0e0e0" stroke-width="2"/></svg>
<svg style="left:157px;top:66px" width="10" height="9" viewBox="0 0 10 9"><rect x="0.5" y="0.5" width="9" height="8" fill="none" stroke="#c8c8c8"/><circle cx="3.5" cy="5" r="3" fill="#3a9fd0"/></svg>
<div class="t" style="left:169.0px;top:65.2px;font-size:8.3px;color:#f1f1f1;letter-spacing:-0.300px">BookStore-API</div>
<svg style="left:515px;top:70.0px" width="4" height="3" viewBox="0 0 4 3"><path d="M0 0 L4 0 L2 2 Z" fill="#999"/></svg>
<svg style="left:525px;top:66px" width="9" height="9" viewBox="0 0 9 9"><path d="M1 3 L4 0.5 L7 3 L4 5.5 Z" fill="#d8b070"/><path d="M3 6 L6 3.5 L9 6 L6 8.5 Z" fill="#e0c080"/></svg>
<div class="t" style="left:537.0px;top:65.2px;font-size:8.3px;color:#f1f1f1;letter-spacing:-0.324px">BookStore_API.Startup</div>
<svg style="left:884px;top:70.0px" width="4" height="3" viewBox="0 0 4 3"><path d="M0 0 L4 0 L2 2 Z" fill="#999"/></svg>
<svg style="left:895px;top:67px" width="8" height="8" viewBox="0 0 8 8"><path d="M4 0.5 L7.5 2.2 L7.5 5.8 L4 7.5 L0.5 5.8 L0.5 2.2 Z M0.5 2.2 L4 4 L7.5 2.2 M4 4 L4 7.5" fill="none" stroke="#a077c8" stroke-width="0.9"/></svg>
<div class="t" style="left:906.0px;top:65.2px;font-size:8.3px;color:#f1f1f1;letter-spacing:-0.272px">ConfigureServices(IServiceCollection services)</div>
<svg style="left:1252px;top:70.0px" width="4" height="3" viewBox="0 0 4 3"><path d="M0 0 L4 0 L2 2 Z" fill="#999"/></svg>
<div class="a" style="left:155px;top:78px;width:1091px;height:592px;background:#1e1e1e;overflow:hidden">
<div class="a" style="left:0;top:0;width:20.5px;height:592px;background:#363637"></div>
<div class="g" style="left:115.0px;top:0.0px;height:591.0px"></div>
<div class="g" style="left:150.5px;top:0.0px;height:591.0px"></div>
<div class="g" style="left:185.5px;top:0.0px;height:457.3px"></div>
<div class="g" style="left:185.5px;top:582.1px;height:8.9px"></div>
<div class="g" style="left:220.5px;top:135.9px;height:214.3px"></div>
<div class="g" style="left:255.5px;top:178.7px;height:64.3px"></div>
<div class="a" style="left:89.0px;top:70.0px;width:7px;height:322.5px;background:#5f8232;"></div>
<div class="a" style="left:89.0px;top:392.5px;width:7px;height:21.5px;background:#e6e98c;"></div>
<div class="a" style="left:89.0px;top:414.0px;width:7px;height:22px;background:#5f8232;"></div>
<div class="a" style="left:104.0px;top:0px;width:2px;height:591px;background:#9a9a9a;"></div>
<div class="a" style="left:106.0px;top:263.5px;width:4px;height:1.5px;background:#9a9a9a;"></div>
<div class="a" style="left:106.0px;top:370.6px;width:4px;height:1.5px;background:#9a9a9a;"></div>
<div class="a" style="left:106.0px;top:477.8px;width:4px;height:1.5px;background:#9a9a9a;"></div>
<div class="a" style="left:99.0px;top:119.1px;width:11px;height:12px;background:#1e1e1e;border:1.5px solid #a0a0a0"></div>
<div class="a" style="left:102.0px;top:124.3px;width:5px;height:1.6px;background:#e0e0e0;"></div>
<div class="a" style="left:99.0px;top:140.6px;width:11px;height:12px;background:#1e1e1e;border:1.5px solid #a0a0a0"></div>
<div class="a" style="left:102.0px;top:145.8px;width:5px;height:1.6px;background:#e0e0e0;"></div>
<div class="a" style="left:99.0px;top:543.9px;width:11px;height:12px;background:#1e1e1e;border:1.5px solid #a0a0a0"></div>
<div class="a" style="left:102.0px;top:549.1px;width:5px;height:1.6px;background:#e0e0e0;"></div>
<div class="a" style="left:99.0px;top:586.8px;width:11px;height:12px;background:#1e1e1e;border:1.5px solid #a0a0a0"></div>
<div class="a" style="left:102.0px;top:592.0px;width:5px;height:1.6px;background:#e0e0e0;"></div>
<svg style="left:67.0px;top:391.0px" width="20" height="22" viewBox="0 0 20 22"><circle cx="8.5" cy="8" r="6.3" fill="#d3c64a"/><circle cx="8.5" cy="8" r="3.5" fill="#e8dc6a"/><rect x="5" y="12" width="7" height="5" fill="#9aa0b0"/><circle cx="13" cy="16" r="5" fill="#c8393b" stroke="#e0a0a0" stroke-width="0.8"/><path d="M11 14 L15 18 M15 14 L11 18" stroke="#fff" stroke-width="1.4"/></svg>
<div class="a" style="left:410.0px;top:392.3px;width:123.5px;height:22px;background:#2862b0;"></div>
<div class="code" style="top:-15.93px;left:216.99px"><span class="v">services</span><span class="p">.</span><span class="m">AddDbContext</span><span class="p">&lt;</span><span class="ty">ApplicationDbContext</span><span class="p">&gt;(</span><span class="v">options</span><span class="p"> =&gt;</span></div>
<div class="ln" style="top:7.30px;left:21.0px;width:43.5px">35</div>
<div class="code" style="top:7.30px;left:252.06px"><span class="v">options</span><span class="p">.</span><span class="m">UseSqlServer</span><span class="p">(</span></div>
<div class="ln" style="top:28.73px;left:21.0px;width:43.5px">36</div>
<div class="code" style="top:28.73px;left:287.12px"><span class="w">Configuration</span><span class="p">.</span><span class="m">GetConnectionString</span><span class="p">(</span><span class="s">&quot;DefaultConnection&quot;</span><span class="p">)));</span></div>
<div class="ln" style="top:50.16px;left:21.0px;width:43.5px">37</div>
<div class="code" style="top:50.16px;left:216.99px"><span class="v">services</span><span class="p">.</span><span class="m">AddDefaultIdentity</span><span class="p">&lt;</span><span class="ty">IdentityUser</span><span class="p">&gt;(</span><span class="v">options</span><span class="p"> =&gt; </span><span class="v">options</span><span class="p">.</span><span class="w">SignIn</span><span class="p">.</span><span class="w">RequireConfirmedAccount</span><span class="p"> = </span><span class="k">true</span><span class="p">)</span></div>
<div class="ln" style="top:71.59px;left:21.0px;width:43.5px">38</div>
<div class="code" style="top:71.59px;left:252.06px"><span class="p">.</span><span class="m">AddEntityFrameworkStores</span><span class="p">&lt;</span><span class="ty">ApplicationDbContext</span><span class="p">&gt;();</span></div>
<div class="ln" style="top:93.02px;left:21.0px;width:43.5px">39</div>
<div class="ln" style="top:114.45px;left:21.0px;width:43.5px">40</div>
<div class="code" style="top:114.45px;left:216.99px"><span class="v">services</span><span class="p">.</span><span class="m">AddSwaggerGen</span><span class="p">(</span><span class="v">c</span><span class="p"> =&gt; {</span></div>
<div class="ln" style="top:135.88px;left:21.0px;width:43.5px">41</div>
<div class="code" style="top:135.88px;left:252.06px"><span class="v">c</span><span class="p">.</span><span class="m">SwaggerDoc</span><span class="p">(</span><span class="s">&quot;v1&quot;</span><span class="p">, </span><span class="k">new</span><span class="p"> </span><span class="ty">OpenApiInfo</span></div>
<div class="ln" style="top:157.31px;left:21.0px;width:43.5px">42</div>
<div class="code" style="top:157.31px;left:252.06px"><span class="p">{</span></div>
<div class="ln" style="top:178.74px;left:21.0px;width:43.5px">43</div>
<div class="code" style="top:178.74px;left:287.12px"><span class="w">Title</span><span class="p"> = </span><span class="s">&quot;Book Store API&quot;</span><span class="p">,</span></div>
<div class="ln" style="top:200.17px;left:21.0px;width:43.5px">44</div>
<div class="code" style="top:200.17px;left:287.12px"><span class="w">Version</span><span class="p"> = </span><span class="s">&quot;v1&quot;</span><span class="p">,</span></div>
<div class="ln" style="top:221.60px;left:21.0px;width:43.5px">45</div>
<div class="code" style="top:221.60px;left:287.12px"><span class="w">Description</span><span class="p"> = </span><span class="s">&quot;This is an educational API for a Book Store&quot;</span></div>
<div class="ln" style="top:243.03px;left:21.0px;width:43.5px">46</div>
<div class="code" style="top:243.03px;left:252.06px"><span class="p">});</span></div>
<div class="ln" style="top:264.46px;left:21.0px;width:43.5px">47</div>
<div class="ln" style="top:285.89px;left:21.0px;width:43.5px">48</div>
<div class="code" style="top:285.89px;left:252.06px"><span class="k">var</span><span class="p"> </span><span class="v">xfile</span><span class="p"> = </span><span class="s">$&quot;</span><span class="w">{</span><span class="ty">Assembly</span><span class="p">.</span><span class="m">GetExecutingAssembly</span><span class="p">().</span><span class="m">GetName</span><span class="p">().</span><span class="w">Name</span><span class="w">}</span><span class="s">.xml&quot;</span><span class="p">;</span></div>
<div class="ln" style="top:307.32px;left:21.0px;width:43.5px">49</div>
<div class="code" style="top:307.32px;left:252.06px"><span class="k">var</span><span class="p"> </span><span class="v">xpath</span><span class="p"> = </span><span class="ty">Path</span><span class="p">.</span><span class="m">Combine</span><span class="p">(</span><span class="ty">AppContext</span><span class="p">.</span><span class="w">BaseDirectory</span><span class="p">, </span><span class="v">xfile</span><span class="p">);</span></div>
<div class="ln" style="top:328.75px;left:21.0px;width:43.5px">50</div>
<div class="code" style="top:328.75px;left:252.06px"><span class="v">c</span><span class="p">.</span><span class="m">IncludeXmlComments</span><span class="p">(</span><span class="v">xpath</span><span class="p">);</span></div>
<div class="ln" style="top:350.18px;left:21.0px;width:43.5px">51</div>
<div class="code" style="top:350.18px;left:216.99px"><span class="p">});</span></div>
<div class="ln" style="top:371.61px;left:21.0px;width:43.5px">52</div>
<div class="ln" style="top:393.04px;left:21.0px;width:43.5px">53</div>
<div class="code" style="top:393.04px;left:216.99px"><span class="v">services</span><span class="p">.</span><span class="m">AddSingleton</span><span class="p">&lt;</span><span class="if">ILoggerService</span><span class="p">, </span><span class="w">LoggerService</span><span class="p">&gt;();</span></div>
<div class="ln" style="top:414.47px;left:21.0px;width:43.5px">54</div>
<div class="ln" style="top:435.90px;left:21.0px;width:43.5px">55</div>
<div class="code" style="top:435.90px;left:216.99px"><span class="v">services</span><span class="p">.</span><span class="m">AddControllers</span><span class="p">();</span></div>
<div class="ln" style="top:457.33px;left:21.0px;width:43.5px">56</div>
<div class="code" style="top:457.33px;left:181.93px"><span class="p">}</span></div>
<div class="ln" style="top:478.76px;left:21.0px;width:43.5px">57</div>
<div class="ln" style="top:500.19px;left:21.0px;width:43.5px">58</div>
<div class="code" style="top:500.19px;left:181.93px"><span class="c">// This method gets called by the runtime. Use this method to configure the HTTP request pipeline.</span></div>
<div class="ln" style="top:539.22px;left:21.0px;width:43.5px">59</div>
<div class="code" style="top:539.22px;left:181.93px"><span class="k">public</span><span class="p"> </span><span class="k">void</span><span class="p"> </span><span class="m">Configure</span><span class="p">(</span><span class="if">IApplicationBuilder</span><span class="p"> </span><span class="v">app</span><span class="p">, </span><span class="if">IWebHostEnvironment</span><span class="p"> </span><span class="v">env</span><span class="p">)</span></div>
<div class="ln" style="top:560.65px;left:21.0px;width:43.5px">60</div>
<div class="code" style="top:560.65px;left:181.93px"><span class="p">{</span></div>
<div class="ln" style="top:582.08px;left:21.0px;width:43.5px">61</div>
<div class="code" style="top:582.08px;left:216.99px"><span class="ck">if</span><span class="p"> (</span><span class="v">env</span><span class="p">.</span><span class="m">IsDevelopment</span><span class="p">())</span></div>
<div class="t" style="left:182.0px;top:523.7px;font-size:11px;color:#999999;letter-spacing:0.488px">0 references</div>
</div>
<svg style="left:705.0px;top:488px" width="113.5" height="4" viewBox="0 0 113.5 4"><path d="M0 3 L3.5 0 L7.0 3 L10.5 0 L14.0 3 L17.5 0 L21.0 3 L24.5 0 L28.0 3 L31.5 0 L35.0 3 L38.5 0 L42.0 3 L45.5 0 L49.0 3 L52.5 0 L56.0 3 L59.5 0 L63.0 3 L66.5 0 L70.0 3 L73.5 0 L77.0 3 L80.5 0 L84.0 3 L87.5 0 L91.0 3 L94.5 0 L98.0 3 L101.5 0 L105.0 3 L108.5 0 L112.0 3 L115.5 0" stroke="#c43c3c" stroke-width="1.3" fill="none"/></svg>
<div class="a" style="left:613px;top:493px;width:204px;height:22px;background:#404043;border:1px solid #4a4a4d"></div>
<svg style="left:620px;top:500px" width="14" height="8" viewBox="0 0 14 8"><circle cx="2.5" cy="4" r="1.5" fill="#c8c8d8"/><path d="M2 4 L8 4" stroke="#c8c8d8" stroke-width="1.2"/><circle cx="10" cy="4" r="2.6" fill="none" stroke="#c8c8d8" stroke-width="1.4"/></svg>
<div class="t" style="left:635.0px;top:498.5px;font-size:8px;color:#6a88b0;letter-spacing:0.035px">interface</div>
<div class="t" style="left:668.0px;top:498.5px;font-size:8px;color:#dcdcdc;letter-spacing:-0.163px">BookStore_API.Contracts.ILoggerService</div>
<svg style="left:612px;top:484px" width="10" height="15" viewBox="0 0 10 15"><path d="M0.5 0.5 L0.5 11 L3 8.5 L5 13 L7 12 L5 8 L8.5 8 Z" fill="#ffffff" stroke="#000" stroke-width="0.8"/></svg>
<div class="a" style="left:1246px;top:78px;width:13px;height:592px;background:#3e3e42"></div>
<div class="a" style="left:1246px;top:78px;width:13px;height:12px;background:#1e1e1e;"></div>
<svg style="left:1248px;top:80px" width="9" height="9" viewBox="0 0 9 9"><path d="M4.5 0 L4.5 9 M0 4.5 L9 4.5" stroke="#e0e0e0" stroke-width="1.5"/></svg>
<svg style="left:1249.5px;top:95px" width="6" height="3" viewBox="0 0 6 3"><path d="M0 3 L3 0 L6 3 Z" fill="#999"/></svg>
<svg style="left:1249.5px;top:661px" width="6" height="3" viewBox="0 0 6 3"><path d="M0 0 L3 3 L6 0 Z" fill="#999"/></svg>
<div class="a" style="left:1248px;top:253px;width:9px;height:124px;background:#686868;"></div>
<div class="a" style="left:1247px;top:163px;width:2px;height:22px;background:#6b8c3a;"></div>
<div class="a" style="left:1247px;top:173px;width:2px;height:12px;background:#e0e080;"></div>
<div class="a" style="left:1247px;top:404px;width:2px;height:54px;background:#6b8c3a;"></div>
<div class="a" style="left:1247px;top:253px;width:2px;height:86px;background:#6b8c3a;"></div>
<div class="a" style="left:1247px;top:336px;width:4px;height:4px;background:#e8e8e8;"></div>
<div class="a" style="left:1250px;top:337px;width:8px;height:2px;background:#e05050;"></div>
<div class="a" style="left:149px;top:670px;width:1110px;height:12px;background:#333337"></div>
<div class="a" style="left:155px;top:670px;width:38px;height:12px;background:#2d2d30;"></div>
<div class="t" style="left:156.5px;top:670.2px;font-size:7.6px;color:#d0d0d0;letter-spacing:-0.410px">184 %</div>
<svg style="left:188px;top:675.0px" width="4" height="3" viewBox="0 0 4 3"><path d="M0 0 L4 0 L2 2 Z" fill="#d0d0d0"/></svg>
<svg style="left:211px;top:671px" width="9" height="9" viewBox="0 0 9 9"><circle cx="4.5" cy="4.5" r="3.7" fill="#f4e0e0" stroke="#e04040" stroke-width="1.4"/><path d="M3 3 L6 6 M6 3 L3 6" stroke="#e04040" stroke-width="1.1"/></svg>
<div class="t" style="left:224.0px;top:670.2px;font-size:8.3px;color:#d0d0d0;letter-spacing:0.000px">1</div>
<svg style="left:243px;top:671px" width="9" height="8" viewBox="0 0 9 8"><path d="M4.5 0 L9 8 L0 8 Z" fill="#f0c040"/><path d="M4.5 2.5 L4.5 5.5" stroke="#000"/></svg>
<div class="t" style="left:254.0px;top:670.2px;font-size:8.3px;color:#d0d0d0;letter-spacing:0.000px">0</div>
<svg style="left:279px;top:672px" width="9" height="8" viewBox="0 0 9 8"><path d="M8.5 4 L1 4 M4 1 L1 4 L4 7" stroke="#4a9ae8" stroke-width="1.3" fill="none"/></svg>
<svg style="left:298px;top:672px" width="9" height="8" viewBox="0 0 9 8"><path d="M0.5 4 L8 4 M5 1 L8 4 L5 7" stroke="#4a9ae8" stroke-width="1.3" fill="none"/></svg>
<div class="a" style="left:316px;top:671px;width:1px;height:10px;background:#888;"></div>
<svg style="left:326px;top:671px" width="8" height="9" viewBox="0 0 8 9"><path d="M1 4 L5 0.5 L7.5 3 L4 7 Z" fill="none" stroke="#c8c8c8"/></svg>
<svg style="left:338px;top:675.0px" width="4" height="3" viewBox="0 0 4 3"><path d="M0 0 L4 0 L2 2 Z" fill="#d0d0d0"/></svg>
<svg style="left:362px;top:673px" width="3" height="6" viewBox="0 0 3 6"><path d="M3 0 L0 3 L3 6 Z" fill="#888"/></svg>
<div class="a" style="left:369px;top:672px;width:486px;height:8px;background:#686868;"></div>
<svg style="left:1121px;top:673px" width="3" height="6" viewBox="0 0 3 6"><path d="M0 0 L3 3 L0 6 Z" fill="#888"/></svg>
<div class="t" style="left:1143.0px;top:670.2px;font-size:7.5px;color:#d0d0d0;letter-spacing:-0.142px">Ln: 53</div>
<div class="t" style="left:1176.0px;top:670.2px;font-size:7.5px;color:#d0d0d0;letter-spacing:-0.183px">Ch: 49</div>
<div class="t" style="left:1210.0px;top:670.2px;font-size:7.5px;color:#d0d0d0;letter-spacing:-1.141px">SPC</div>
<div class="t" style="left:1235.0px;top:670.2px;font-size:7.5px;color:#d0d0d0;letter-spacing:-0.646px">CRLF</div>

<!-- ===== Right strip ===== -->
<div class="a" style="left:1259px;top:48px;width:21px;height:655px;background:#2d2d30"></div>
<div class="a" style="left:1276px;top:48px;width:4px;height:52px;background:#3e3e42;"></div>
<div class="a" style="left:1276px;top:102px;width:4px;height:66px;background:#3e3e42;"></div>
<div class="a" style="left:1276px;top:170px;width:4px;height:93px;background:#3e3e42;"></div>
<div class="a" style="left:1276px;top:265px;width:4px;height:45px;background:#3e3e42;"></div>
<div class="t" style="left:1262.5px;top:50px;font-size:8.5px;color:#d0d0d0;letter-spacing:-0.023px;transform-origin:0 0;transform:translate(12px,0) rotate(90deg)">Notifications</div>
<div class="t" style="left:1262.5px;top:104px;font-size:8.5px;color:#d0d0d0;letter-spacing:-0.108px;transform-origin:0 0;transform:translate(12px,0) rotate(90deg)">Diagnostic Tools</div>
<div class="t" style="left:1262.5px;top:171px;font-size:8.5px;color:#d0d0d0;letter-spacing:-0.276px;transform-origin:0 0;transform:translate(12px,0) rotate(90deg)">Browser Link Dashboard</div>
<div class="t" style="left:1262.5px;top:272px;font-size:8.5px;color:#d0d0d0;letter-spacing:-0.874px;transform-origin:0 0;transform:translate(12px,0) rotate(90deg)">Properties</div>

<!-- ===== Tool tabs row ===== -->
<div class="t" style="left:20.0px;top:685.7px;font-size:8.3px;color:#d0d0d0;letter-spacing:-0.236px">Data Tools Operations</div>
<div class="a" style="left:19px;top:700px;width:79px;height:3px;background:#3e3e42;"></div>
<div class="t" style="left:105.0px;top:685.7px;font-size:8.3px;color:#d0d0d0;letter-spacing:-0.349px">Error List ...</div>
<div class="a" style="left:104px;top:700px;width:40px;height:3px;background:#3e3e42;"></div>
<div class="t" style="left:152.0px;top:685.7px;font-size:8.3px;color:#d0d0d0;letter-spacing:0.014px">Output</div>
<div class="a" style="left:151px;top:700px;width:27px;height:3px;background:#3e3e42;"></div>
<div class="t" style="left:185.0px;top:685.7px;font-size:8.3px;color:#d0d0d0;letter-spacing:-0.309px">Package Manager Console</div>
<div class="a" style="left:184px;top:700px;width:95px;height:3px;background:#3e3e42;"></div>

<!-- ===== Status bar ===== -->
<div class="a" style="left:0;top:703px;width:1280px;height:17px;background:#007acc"></div>
<svg style="left:3px;top:706px" width="11" height="10" viewBox="0 0 11 10"><path d="M2.5 0.5 L10.5 0.5 L8.5 9.5 L0.5 9.5 Z M3 3.5 L8.5 3.5 M2.5 6 L8 6" stroke="#ffffff" fill="none"/></svg>
<div class="t" style="left:18.0px;top:705.7px;font-size:8.3px;color:#ffffff;letter-spacing:-0.281px">Item(s) Saved</div>
<svg style="left:1140px;top:706px" width="7" height="10" viewBox="0 0 7 10"><path d="M3.5 10 L3.5 1 M0.5 4 L3.5 1 L6.5 4" stroke="#fff" stroke-width="1.3" fill="none"/></svg>
<div class="t" style="left:1153.0px;top:705.7px;font-size:8.3px;color:#ffffff;letter-spacing:-0.174px">Add to Source Control</div>
<svg style="left:1235.5px;top:709px" width="6" height="3" viewBox="0 0 6 3"><path d="M0 3 L3 0 L6 3 Z" fill="#fff"/></svg>
<svg style="left:1254px;top:705px" width="10" height="11" viewBox="0 0 10 11"><path d="M1 8 Q2 7 2 4 Q2 1 5 1 Q8 1 8 4 Q8 7 9 8 Z" fill="#d8d8d8"/></svg>
<svg style="left:1259px;top:709px" width="8" height="8" viewBox="0 0 8 8"><circle cx="4" cy="4" r="3.8" fill="#d83434"/></svg>

</div></body></html>
